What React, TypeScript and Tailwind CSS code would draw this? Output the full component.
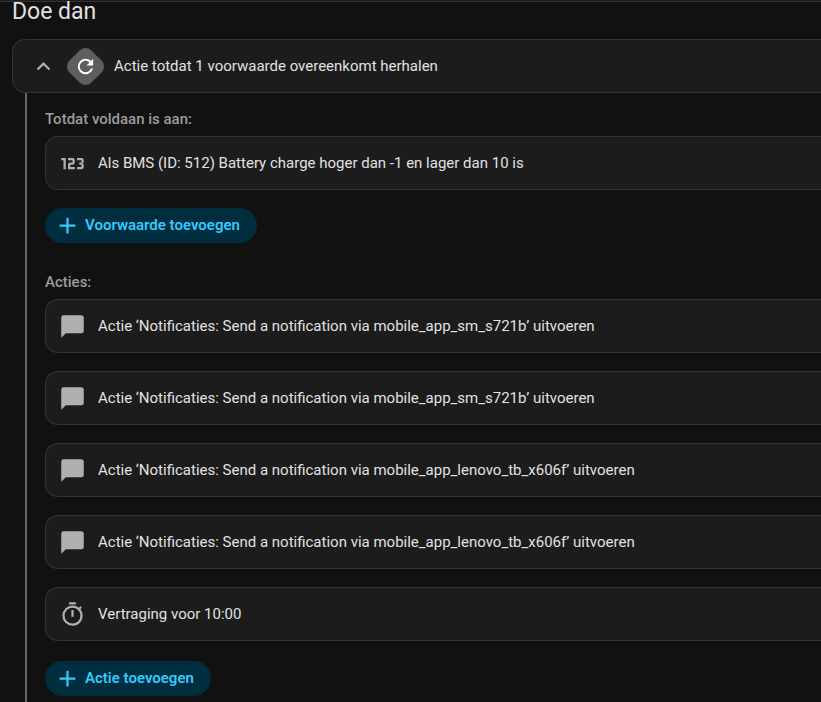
const icons = {
  chevronUp: "M7.41,15.41L12,10.83L16.59,15.41L18,14L12,8L6,14L7.41,15.41Z",
  refresh:
    "M17.65,6.35C16.2,4.9 14.21,4 12,4A8,8 0 0,0 4,12A8,8 0 0,0 12,20C15.73,20 18.84,17.45 19.73,14H17.65C16.83,16.33 14.61,18 12,18A6,6 0 0,1 6,12A6,6 0 0,1 12,6C13.66,6 15.14,6.69 16.22,7.78L13,11H20V4L17.65,6.35Z",
  numeric:
    "M4,17V9H2V7H6V17H4M22,15C22,16.11 21.1,17 20,17H16V15H20V13H18V11H20V9H16V7H20A2,2 0 0,1 22,9V10.5A1.5,1.5 0 0,1 20.5,12A1.5,1.5 0 0,1 22,13.5V15M14,15V17H8V13C8,11.89 8.9,11 10,11H12V9H8V7H12A2,2 0 0,1 14,9V11C14,12.11 13.1,13 12,13H10V15H14Z",
  message:
    "M20,2H4A2,2 0 0,0 2,4V22L6,18H20A2,2 0 0,0 22,16V4C22,2.89 21.1,2 20,2Z",
  timer:
    "M12,20A7,7 0 0,1 5,13A7,7 0 0,1 12,6A7,7 0 0,1 19,13A7,7 0 0,1 12,20M19.03,7.39L20.45,5.97C20,5.46 19.55,5 19.04,4.56L17.62,6C16.07,4.74 14.12,4 12,4A9,9 0 0,0 3,13A9,9 0 0,0 12,22C17,22 21,17.97 21,13C21,10.88 20.26,8.93 19.03,7.39M11,14H13V8H11M15,1H9V3H15V1Z",
  plus: "M19,13H13V19H11V13H5V11H11V5H13V11H19V13Z",
};

type IconName = keyof typeof icons;

function Icon({ name, className }: { name: IconName; className: string }) {
  return (
    <svg viewBox="0 0 24 24" fill="currentColor" aria-hidden="true" className={`shrink-0 ${className}`}>
      <path d={icons[name]} />
    </svg>
  );
}

function Row({ icon, text }: { icon: IconName; text: string }) {
  return (
    <div className="flex h-[54px] items-center gap-3 rounded-l-[13px] border border-r-0 border-[#333] bg-[#1c1c1c] pl-[13px]">
      <Icon name={icon} className="size-[27px] text-[#b0b0b0]" />
      <h3 className="text-[15px] leading-5">{text}</h3>
    </div>
  );
}

function AddButton({ label }: { label: string }) {
  return (
    <button
      type="button"
      className="flex h-[35px] items-center gap-1 self-start rounded-full bg-[#002e3e] pr-[17px] pl-[9px] text-[15px] font-semibold text-[#37c8fd]"
    >
      <Icon name="plus" className="size-[27px]" />
      {label}
    </button>
  );
}

const actions: { icon: IconName; text: string }[] = [
  { icon: "message", text: "Actie ‘Notificaties: Send a notification via mobile_app_sm_s721b’ uitvoeren" },
  { icon: "message", text: "Actie ‘Notificaties: Send a notification via mobile_app_sm_s721b’ uitvoeren" },
  { icon: "message", text: "Actie ‘Notificaties: Send a notification via mobile_app_lenovo_tb_x606f’ uitvoeren" },
  { icon: "message", text: "Actie ‘Notificaties: Send a notification via mobile_app_lenovo_tb_x606f’ uitvoeren" },
  { icon: "timer", text: "Vertraging voor 10:00" },
];

export default function App() {
  return (
    <main className="min-h-screen border-t border-[#1c1c1c] bg-[#111] font-['Roboto',sans-serif] text-[#e1e1e1]">
      <div className="border-t border-[#333] pl-3">
        <h1 className="text-[23px] leading-5">Doe dan</h1>

        <div className="mt-[17px] flex h-[54px] items-center rounded-l-[13px] border border-r-0 border-[#333] bg-[#1c1c1c] pl-[17px]">
          <button type="button" aria-label="Inklappen" className="text-[#b0b0b0]">
            <Icon name="chevronUp" className="size-[27px]" />
          </button>
          <div className="ml-[13px] grid size-[31px] rotate-45 place-items-center rounded-lg bg-[#5e5e5e]">
            <Icon name="refresh" className="size-[23px] -rotate-45 text-white" />
          </div>
          <h2 className="ml-[13px] text-[15px] leading-5">Actie totdat 1 voorwaarde overeenkomt herhalen</h2>
        </div>

        <div className="ml-[13px] flex flex-col border-l-2 border-[#666] pb-4 pl-[18px]">
          <h2 className="mt-4 mb-[7px] text-[15px] leading-5 font-medium text-[#9b9b9b]">Totdat voldaan is aan:</h2>
          <div className="mb-[18px]">
            <Row icon="numeric" text="Als BMS (ID: 512) Battery charge hoger dan -1 en lager dan 10 is" />
          </div>
          <AddButton label="Voorwaarde toevoegen" />

          <h2 className="mt-[29px] mb-[7px] text-[15px] leading-5 font-medium text-[#9b9b9b]">Acties:</h2>
          <div className="mb-5 flex flex-col gap-[18px]">
            {actions.map((action, index) => (
              <Row key={index} icon={action.icon} text={action.text} />
            ))}
          </div>
          <AddButton label="Actie toevoegen" />
        </div>
      </div>
    </main>
  );
}
